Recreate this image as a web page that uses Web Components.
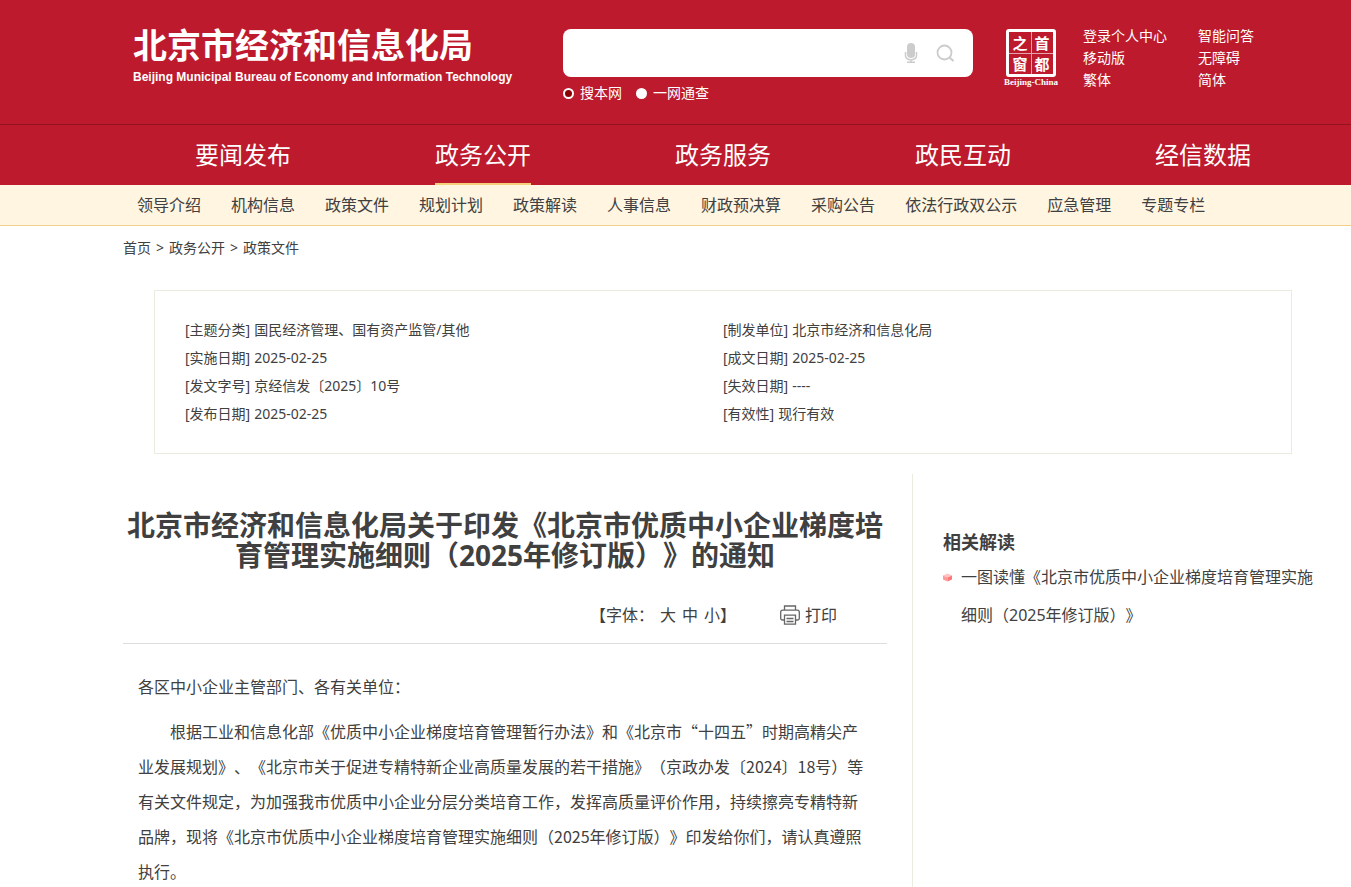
<!DOCTYPE html>
<html lang="zh-CN">
<head>
<meta charset="utf-8">
<title>北京市经济和信息化局</title>
<style>
html{--red:#bd1a2d;--ink:#404040;--pad:0 28px 0 123px}
body{margin:0;background:#fff;color:var(--ink);font:16px/24px "Noto Sans","Noto Sans CJK SC",sans-serif;text-spacing-trim:space-all}
</style>
</head>
<body>
<bj-page></bj-page>
<script>
const define = (name, html) => customElements.define(name, class extends HTMLElement {
  constructor() {
    super();
    const t = document.createElement('template');
    t.innerHTML = '<style>*{box-sizing:border-box}a{color:inherit;text-decoration:none}</style>' + html;
    this.attachShadow({mode: 'open'}).append(t.content.cloneNode(true));
  }
});

define('site-seal', `
<style>
:host{display:block;width:54px;color:#fff;text-align:center}
.box{display:grid;grid-template-columns:1fr 1fr;width:50px;height:48px;margin:0 auto;border:3px solid #fff;border-radius:3px;font:bold 15px/21px "Noto Sans CJK SC",sans-serif;
background:linear-gradient(#e7a3ab,#e7a3ab) center/1px 100% no-repeat,linear-gradient(#e7a3ab,#e7a3ab) center/100% 1px no-repeat}
.en{display:flex;justify-content:center;font:bold 9px/10px "Liberation Serif",serif;white-space:nowrap}
</style>
<a href="#"><span class="box"><span>之</span><span>首</span><span>窗</span><span>都</span></span><span class="en">Beijing-China</span></a>`);

define('site-search', `
<style>
:host{display:block;width:410px}
.bar{display:flex;align-items:center;height:48px;background:#fff;border-radius:8px;padding-right:16px}
input[type=text]{flex:1;min-width:0;height:40px;border:0;outline:0;background:none;padding:0 16px;font:16px "Noto Sans CJK SC",sans-serif}
button{border:0;background:none;padding:0;display:block;height:24px}
.mic{width:16px;margin-right:14px}.go{width:24px}
svg{display:block}
.opts{display:flex;gap:14px;padding-top:5px;color:#fff;font-size:14px;line-height:22px}
label{display:flex;align-items:center;gap:6px}
input[type=radio]{appearance:none;width:11px;height:11px;margin:0;border-radius:50%;background:#fff}
input[type=radio]:checked{background:#8b0000;border:2px solid #fff}
</style>
<form>
<div class="bar"><input type="text" aria-label="搜索">
<button type="button" class="mic" aria-label="语音"><svg width="16" height="24" viewBox="0 0 16 24"><rect x="4" y="2" width="8" height="15" rx="4" fill="#ccc"/><path d="M2.500 11v3.500a5.500 4.500 0 0 0 11 0V11M8 19v2M4 21.200h8" fill="none" stroke="#ccc" stroke-width="1.500"/></svg></button>
<button type="button" class="go" aria-label="搜索"><svg width="24" height="24" viewBox="0 0 24 24" fill="none" stroke="#ccc"><circle cx="11.500" cy="11.500" r="7" stroke-width="1.800"/><path d="M16.500 16.500l4 3.500" stroke-width="2.200"/></svg></button></div>
<div class="opts"><label><input type="radio" name="s" checked>搜本网</label><label><input type="radio" name="s">一网通查</label></div>
</form>`);

define('site-header', `
<style>
:host{display:block;background:var(--red);color:#fff}
.in{display:grid;grid-template-columns:430px 420px 1fr;padding:var(--pad);height:124px}
h1{margin:0;padding:24px 0 0 10px;font:bold 34px/40px "Noto Sans CJK SC",sans-serif}
h1 small{display:block;font:bold 12px/16px "Liberation Sans",sans-serif;padding-top:5px}
site-search{margin:29px 0 0 10px}
.right{display:flex;padding:25px 0 0 31px}
site-seal{margin-top:4px}
ul{list-style:none;margin:0;padding:0;font-size:14px;line-height:22px;display:grid;grid-template-columns:115px 1fr;margin-left:25px;align-content:start;white-space:nowrap}
</style>
<header class="in"><h1>北京市经济和信息化局<small>Beijing Municipal Bureau of Economy and Information Technology</small></h1>
<site-search></site-search>
<div class="right"><site-seal></site-seal><ul><li><a href="#">登录个人中心</a></li><li><a href="#">智能问答</a></li><li><a href="#">移动版</a></li><li><a href="#">无障碍</a></li><li><a href="#">繁体</a></li><li><a href="#">简体</a></li></ul></div></header>`);

define('main-nav', `
<style>
:host{display:block;background:var(--red);color:#fff;border-top:1px solid #91131f}
nav{display:grid;grid-template-columns:repeat(5,1fr);justify-items:center;padding:var(--pad);font-size:24px;line-height:60px}
a{height:60px}
.on{border-bottom:2px solid #f5d27a}
</style>
<nav><a href="#">要闻发布</a><a href="#" class="on">政务公开</a><a href="#">政务服务</a><a href="#">政民互动</a><a href="#">经信数据</a></nav>`);

define('sub-nav', `
<style>
:host{display:block;background:#fff5e0;border-bottom:1px solid #f3cf8b}
nav{display:flex;flex-wrap:wrap;gap:0 30px;padding:var(--pad);line-height:40px}
a:first-child{margin-left:14px}
</style>
<nav><a href="#">领导介绍</a><a href="#">机构信息</a><a href="#">政策文件</a><a href="#">规划计划</a><a href="#">政策解读</a><a href="#">人事信息</a><a href="#">财政预决算</a><a href="#">采购公告</a><a href="#">依法行政双公示</a><a href="#">应急管理</a><a href="#">专题专栏</a></nav>`);

define('crumb-trail', `
<style>
:host{display:block;padding:var(--pad);font-size:14px;line-height:44px}
nav{display:flex;gap:5px}
</style>
<nav><a href="#">首页</a><span>&gt;</span><a href="#">政务公开</a><span>&gt;</span><a href="#">政策文件</a></nav>`);

define('doc-meta', `
<style>
:host{display:block;margin:20px 59px 20px 154px;border:1px solid #ebebe0;padding:25px 30px;font-size:14px;line-height:28px}
dl{display:grid;grid-template-columns:1fr 1fr;margin:0}
dl div{display:flex;gap:4px}
dd{margin:0}
</style>
<dl>
<div><dt>[主题分类]</dt><dd>国民经济管理、国有资产监管/其他</dd></div><div><dt>[制发单位]</dt><dd>北京市经济和信息化局</dd></div>
<div><dt>[实施日期]</dt><dd>2025-02-25</dd></div><div><dt>[成文日期]</dt><dd>2025-02-25</dd></div>
<div><dt>[发文字号]</dt><dd>京经信发〔2025〕10号</dd></div><div><dt>[失效日期]</dt><dd>----</dd></div>
<div><dt>[发布日期]</dt><dd>2025-02-25</dd></div><div><dt>[有效性]</dt><dd>现行有效</dd></div>
</dl>`);

define('doc-article', `
<style>
:host{display:block;padding:36px 25px 0 0}
h1{margin:0;font-size:28px;line-height:30px;text-align:center}
.tools{display:flex;justify-content:flex-end;align-items:center;padding:28px 50px 12px 0;border-bottom:1px solid #ddd;height:74px;line-height:32px}
.size{display:flex;margin-right:44px}
.size button+button{margin-left:6px}
.size button:first-of-type{margin-left:6px}
button{border:0;background:none;padding:0;color:inherit;font:inherit}
.print{display:flex;align-items:center;gap:5px}
.body{padding:25px 15px 0;font-family:"Noto Sans CJK SC",sans-serif}
p{margin:0 0 10px;line-height:35px}
p:last-child{text-indent:2em;margin:0}
</style>
<h1>北京市经济和信息化局关于印发《北京市优质中小企业梯度培育管理实施细则（2025年修订版）》的通知</h1>
<div class="tools"><div class="size"><span>【字体：</span><button>大</button><button>中</button><button>小</button><span>】</span></div>
<button class="print"><svg width="20" height="20" viewBox="0 0 20 20" fill="none" stroke="#666" stroke-width="1.300"><path d="M4.500 5V1h11v4M4.500 15H2.500a1.800 1.800 0 0 1-1.800-1.800V7A1.800 1.800 0 0 1 2.500 5.200h15A1.800 1.800 0 0 1 19.300 7v6.200a1.800 1.800 0 0 1-1.800 1.800h-2M4.500 10.200h11v9h-11zM6.500 13.500h7M6.500 16.500h7"/></svg>打印</button></div>
<div class="body"><p>各区中小企业主管部门、各有关单位：</p>
<p>根据工业和信息化部《优质中小企业梯度培育管理暂行办法》和《北京市“十四五”时期高精尖产业发展规划》、《北京市关于促进专精特新企业高质量发展的若干措施》（京政办发〔2024〕18号）等有关文件规定，为加强我市优质中小企业分层分类培育工作，发挥高质量评价作用，持续擦亮专精特新品牌，现将《北京市优质中小企业梯度培育管理实施细则（2025年修订版）》印发给你们，请认真遵照执行。</p></div>`);

define('related-list', `
<style>
:host{display:block;border-left:1px solid #ebebe0;padding:52px 0 0 30px}
h2{margin:0;font-size:18px;line-height:32px}
ul{list-style:none;margin:0;padding:0;line-height:38px}
li{display:flex;gap:9px}
svg{flex:none;margin-top:15px}
</style>
<h2>相关解读</h2>
<ul><li><svg width="9" height="9" viewBox="0 0 9 9"><path d="M0 2.500L4.500.5 9 2.500 4.500 4.500z" fill="#ffc4c4"/><path d="M0 2.500l4.500 2V8.500L0 6.500z" fill="#ff9a9a"/><path d="M9 2.500l-4.500 2V8.500L9 6.500z" fill="#f77"/></svg><a href="#">一图读懂《北京市优质中小企业梯度培育管理实施细则（2025年修订版）》</a></li></ul>`);

define('bj-page', `
<style>
:host{display:block}
main{display:grid;grid-template-columns:789px 1fr;padding:var(--pad)}
</style>
<site-header></site-header><main-nav></main-nav><sub-nav></sub-nav><crumb-trail></crumb-trail><doc-meta></doc-meta>
<main><doc-article></doc-article><related-list></related-list></main>`);
</script>
</body>
</html>
